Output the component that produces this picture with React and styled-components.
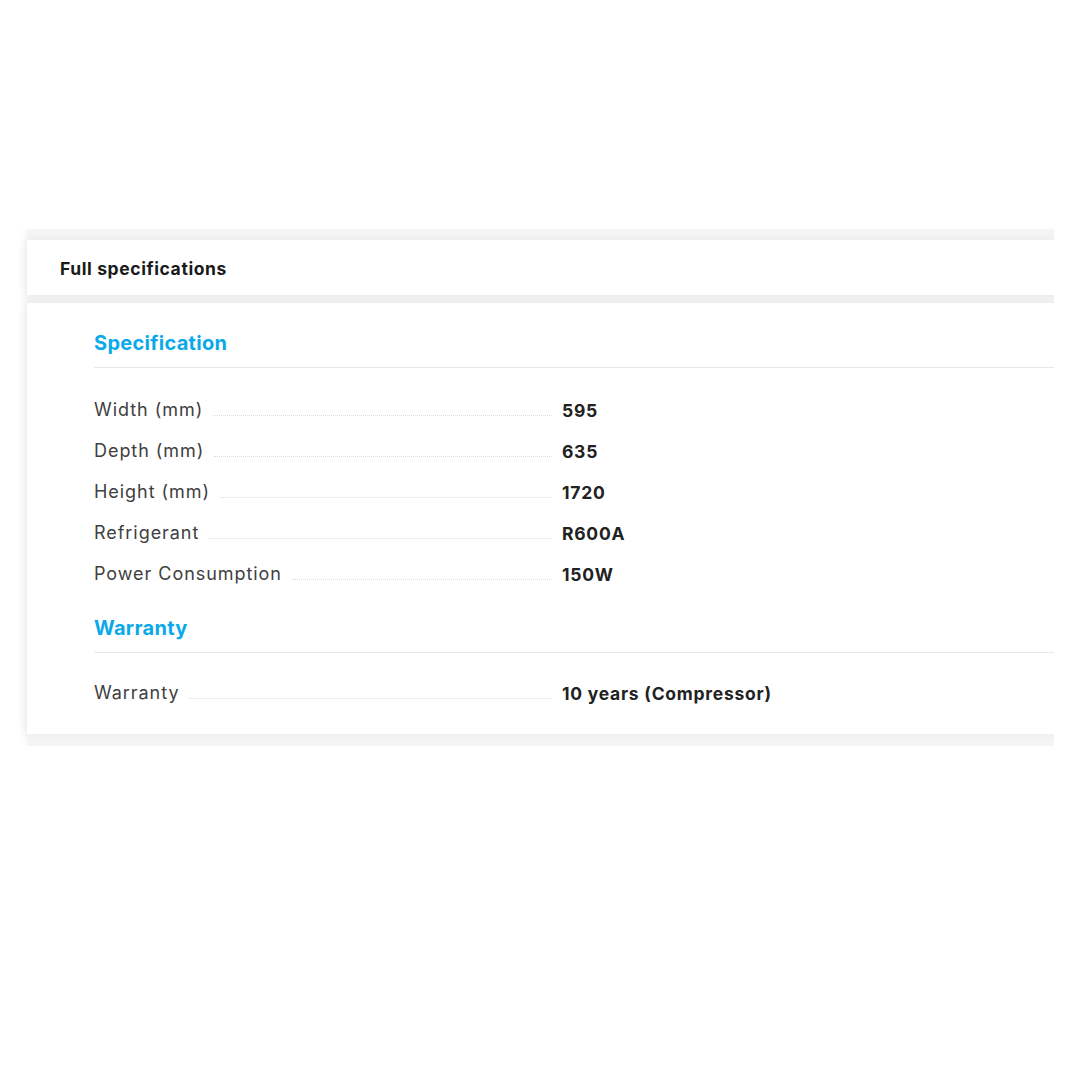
import React from 'react'
import styled, { createGlobalStyle } from 'styled-components'

const GlobalStyle = createGlobalStyle`
    html, body {
        margin: 0;
        padding: 0;
        background: #ffffff;
    }
    body {
        font-family: Inter, 'Liberation Sans', sans-serif;
    }
`

const Page = styled.div`
    width: 1054px;
    padding: 229px 0 0 27px;
    box-sizing: border-box;
    overflow: hidden;
`

const Stack = styled.div`
    display: flex;
    flex-direction: column;
    gap: 8px;
    width: 1060px;
    padding: 11px 0 12px;
    background: #f5f5f5;
    box-shadow: -6px 0 10px -4px rgba(0, 0, 0, 0.06);
`

const Card = styled.section`
    background: #ffffff;
    box-shadow: 0 0 10px rgba(0, 0, 0, 0.06);
`

const Header = styled(Card)`
    height: 55px;
    display: flex;
    align-items: center;
    padding-left: 33px;
    h2 {
        margin: 2px 0 0;
        font-size: 17.5px;
        font-weight: 700;
        color: #1a1a1a;
        letter-spacing: 0.6px;
    }
`

const Body = styled(Card)`
    padding: 28px 0 20px 67px;
`

const GroupTitle = styled.h3`
    margin: ${p => (p.$first ? '0' : '21px')} 0 0;
    padding-bottom: 12px;
    border-bottom: 1px solid #e8e8e8;
    font-size: 20px;
    line-height: 24px;
    font-weight: 700;
    letter-spacing: 0.3px;
    color: #0aa9ea;
`

const Rows = styled.dl`
    margin: ${p => p.$top}px 0 0;
    display: flex;
    flex-direction: column;
`

const Row = styled.div`
    display: flex;
    align-items: center;
    height: 41px;
`

const Label = styled.dt`
    width: 458px;
    display: flex;
    align-items: center;
    font-size: 18px;
    letter-spacing: 0.95px;
    color: #404040;
    margin-top: -3px;
    span {
        white-space: nowrap;
    }
    &:after {
        content: '';
        flex: 1;
        margin: 12px 0 0 10px;
        border-bottom: 1px dotted #dcdcdc;
    }
`

const Value = styled.dd`
    margin: 0 0 0 10px;
    font-size: 17.5px;
    font-weight: 700;
    letter-spacing: 0.75px;
    color: #222;
`

const groups = [
    {
        title: 'Specification',
        top: 22,
        rows: [
            ['Width (mm)', '595'],
            ['Depth (mm)', '635'],
            ['Height (mm)', '1720'],
            ['Refrigerant', 'R600A'],
            ['Power Consumption', '150W'],
        ],
    },
    {
        title: 'Warranty',
        top: 20,
        rows: [['Warranty', '10 years (Compressor)']],
    },
]

export default function App() {
    return (
        <>
            <GlobalStyle />
            <Page>
                <Stack>
                    <Header>
                        <h2>Full specifications</h2>
                    </Header>
                    <Body>
                        {groups.map((g, i) => (
                            <div key={g.title}>
                                <GroupTitle $first={i === 0}>{g.title}</GroupTitle>
                                <Rows $top={g.top}>
                                    {g.rows.map(([k, v]) => (
                                        <Row key={k}>
                                            <Label><span>{k}</span></Label>
                                            <Value>{v}</Value>
                                        </Row>
                                    ))}
                                </Rows>
                            </div>
                        ))}
                    </Body>
                </Stack>
            </Page>
        </>
    )
}
